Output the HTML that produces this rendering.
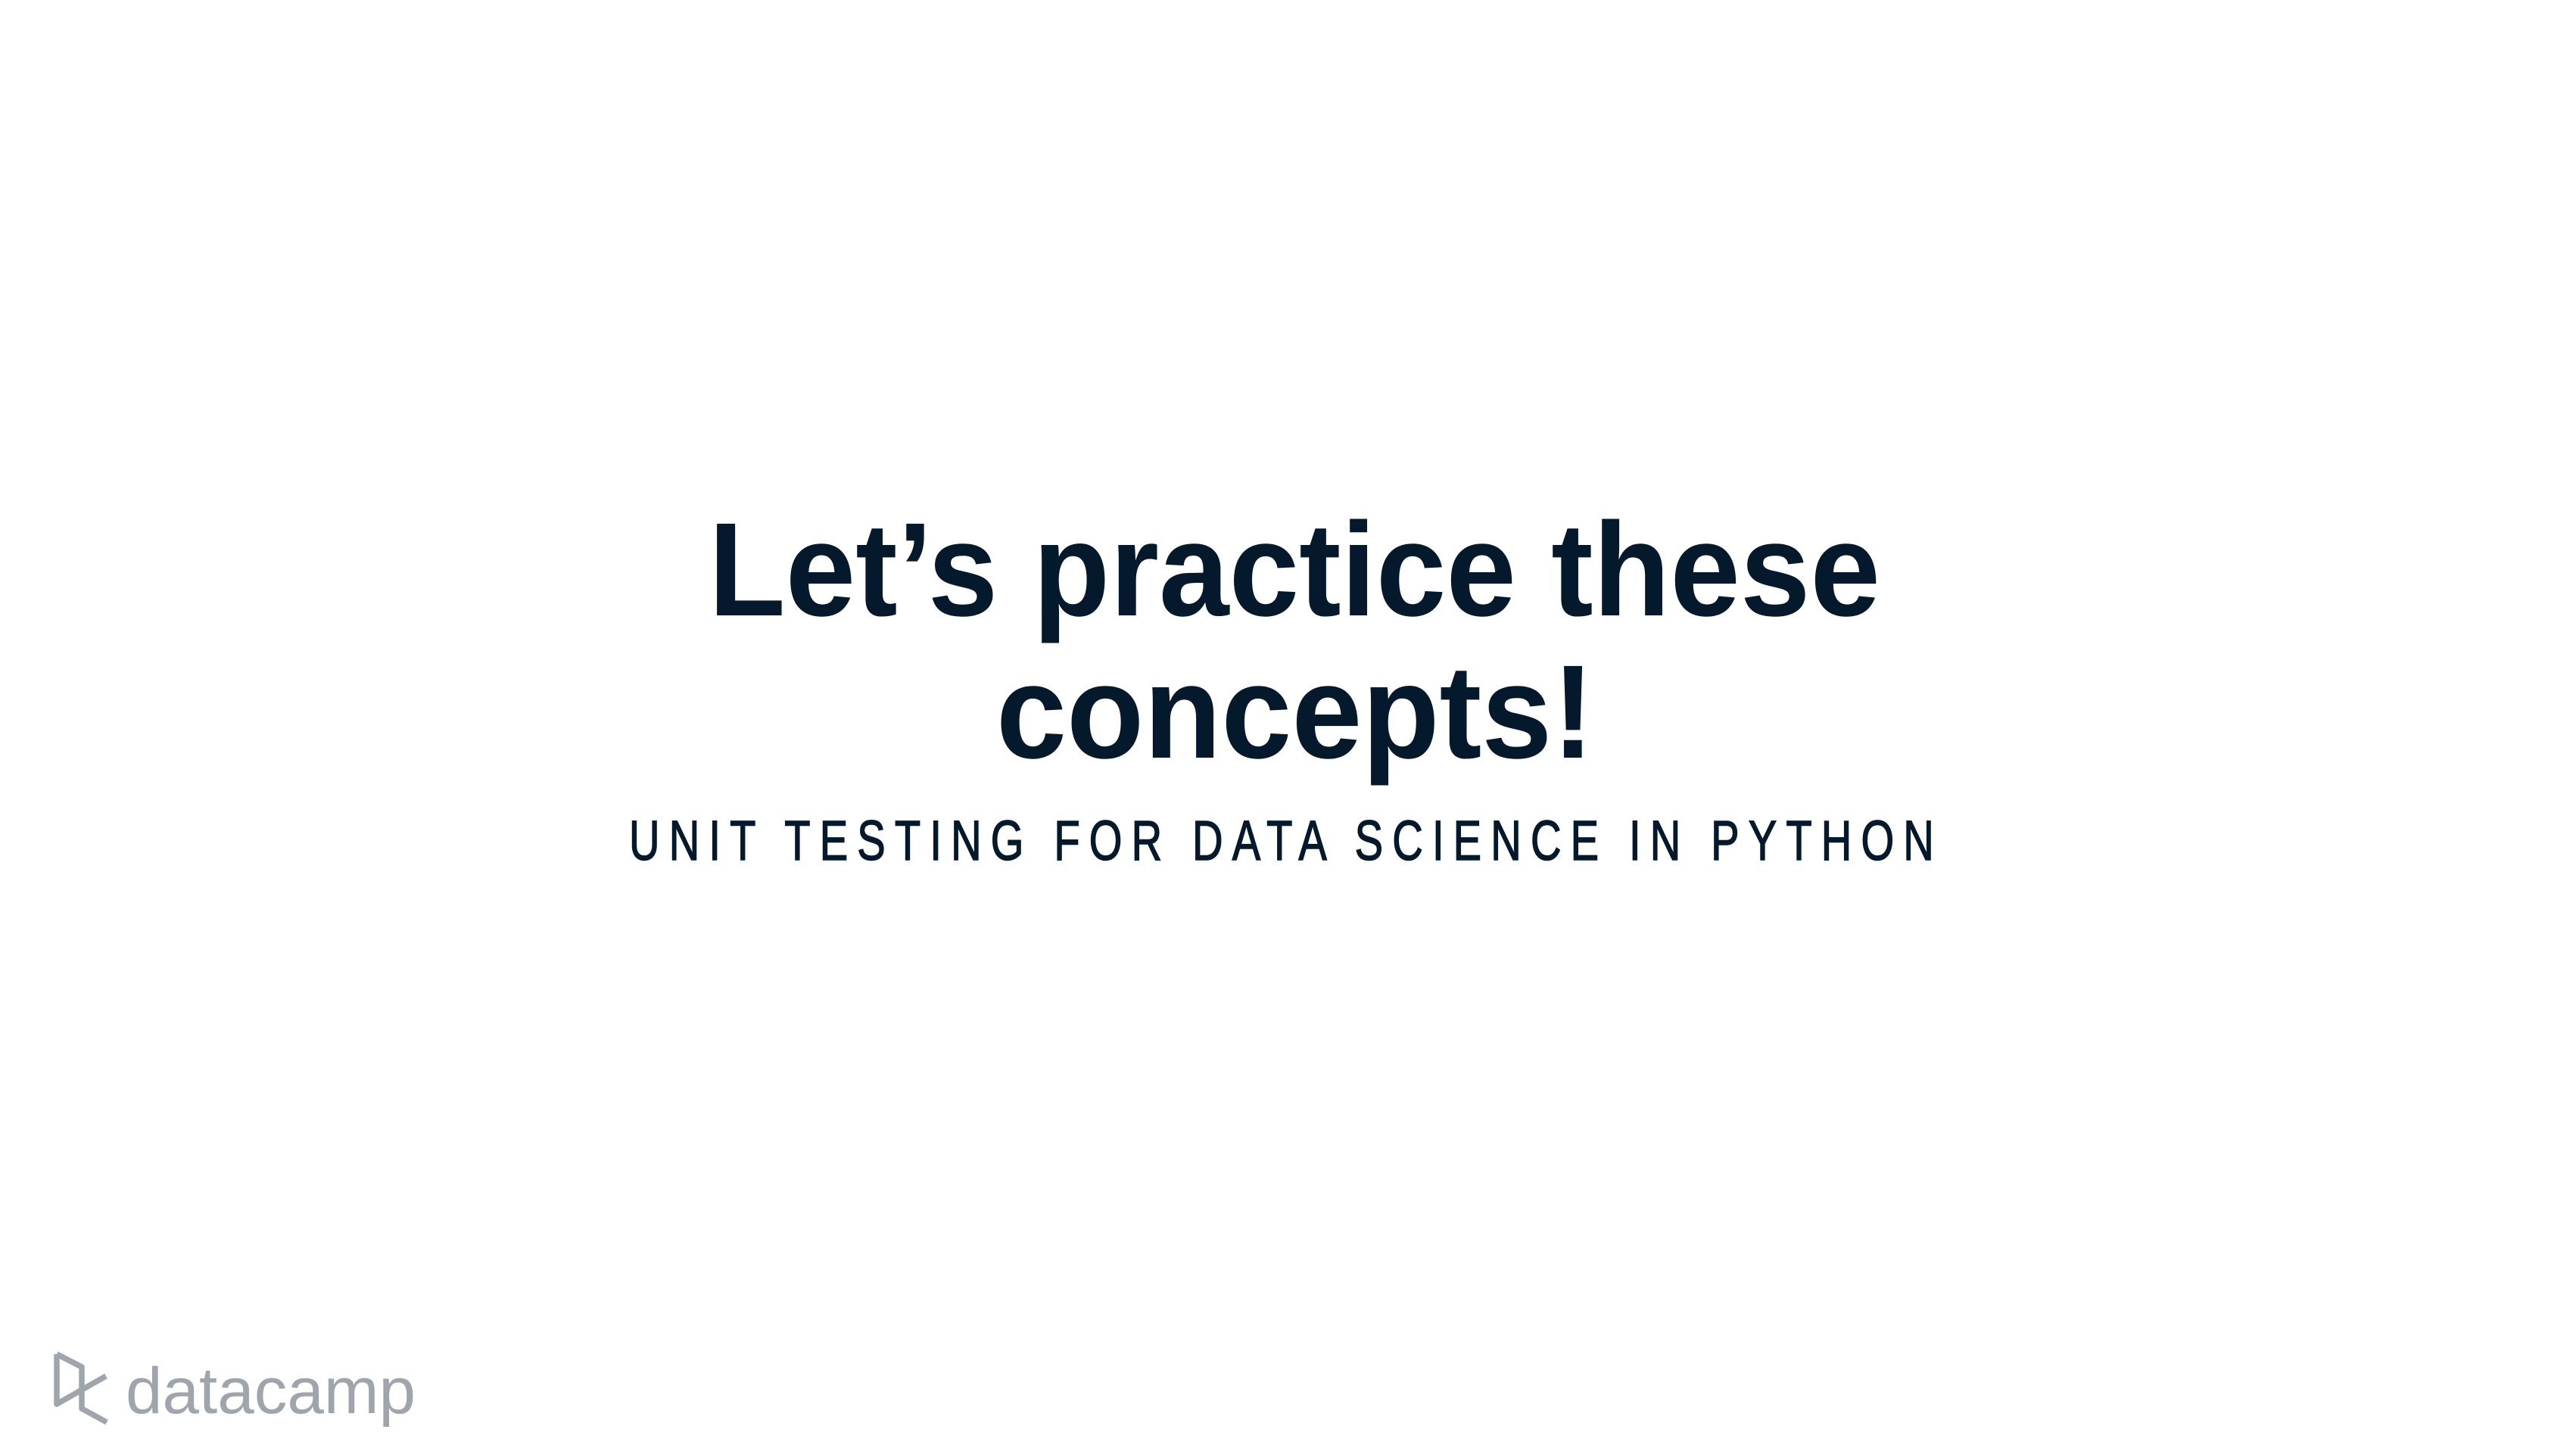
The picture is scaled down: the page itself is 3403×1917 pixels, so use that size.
<!DOCTYPE html>
<html><head><meta charset="utf-8"><style>html,body{margin:0;padding:0;background:#fff;width:3403px;height:1917px;overflow:hidden}</style></head>
<body>
<svg width="3403" height="1917" viewBox="0 0 3403 1917" xmlns="http://www.w3.org/2000/svg">
<rect width="3403" height="1917" fill="#fff"/>
<g fill="#05192d" font-family="Liberation Sans, sans-serif" font-weight="bold">
<text x="936" y="813" font-size="176" textLength="1548" lengthAdjust="spacingAndGlyphs">Let’s practice these</text>
<text x="1316" y="1001" font-size="176" textLength="790" lengthAdjust="spacingAndGlyphs">concepts!</text>
</g>
<text x="831" y="1136" font-family="Liberation Sans, sans-serif" font-size="74" fill="#05192d" stroke="#05192d" stroke-width="1.5" letter-spacing="16" textLength="1736" lengthAdjust="spacingAndGlyphs">UNIT TESTING FOR DATA SCIENCE IN PYTHON</text>
<g fill="none" stroke="#9ea5ac" stroke-width="7.5" stroke-linejoin="round">
<path d="M75 1789 L75 1855 L140 1818"/>
<path d="M75 1789 L108 1806 L108 1861 L141 1879"/>
</g>
<text x="166" y="1867" font-family="Liberation Sans, sans-serif" font-size="86" fill="#9ea5ac" textLength="383" lengthAdjust="spacingAndGlyphs">datacamp</text>
</svg>
</body></html>
